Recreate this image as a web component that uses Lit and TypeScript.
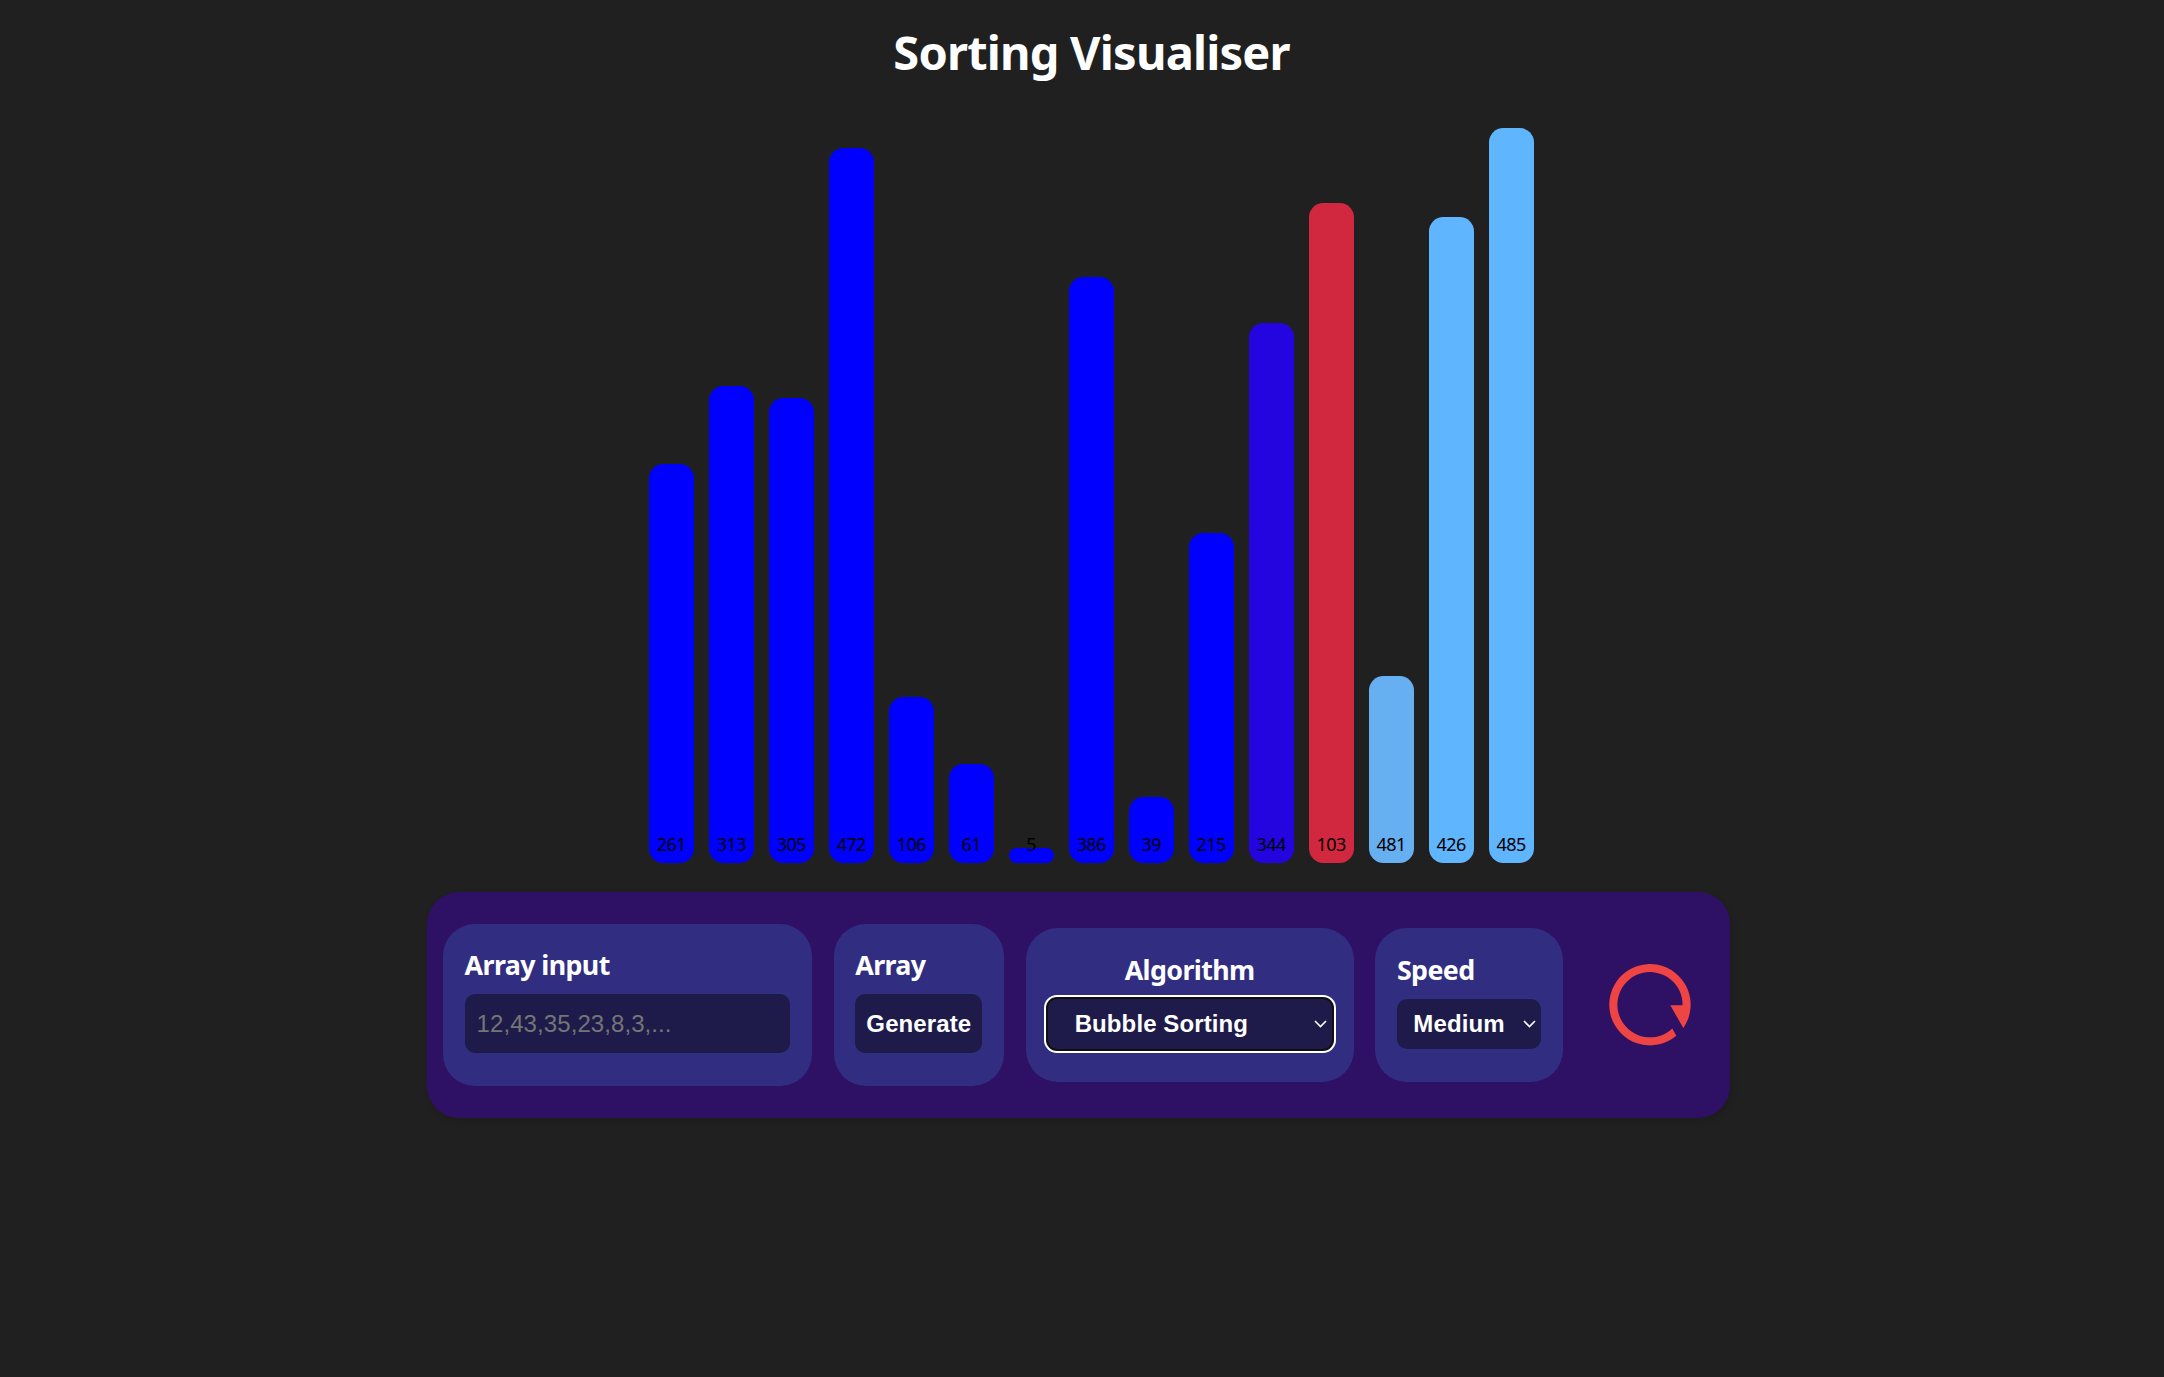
import { LitElement, html, css } from "lit";
import { customElement, state } from "lit/decorators.js";
import { styleMap } from "lit/directives/style-map.js";

interface Bar {
  label: number;
  height: number;
  color: string;
}

const IDLE = "#0000ff";
const SORTED = "#60b5ff";

@customElement("app-root")
export class AppRoot extends LitElement {
  @state() private bars: Bar[] = [
    { label: 261, height: 399, color: IDLE },
    { label: 313, height: 477, color: IDLE },
    { label: 305, height: 465, color: IDLE },
    { label: 472, height: 715, color: IDLE },
    { label: 106, height: 166, color: IDLE },
    { label: 61, height: 99, color: IDLE },
    { label: 5, height: 15, color: IDLE },
    { label: 386, height: 586, color: IDLE },
    { label: 39, height: 66, color: IDLE },
    { label: 215, height: 330, color: IDLE },
    { label: 344, height: 540, color: "#2405e0" },
    { label: 103, height: 660, color: "#d12840" },
    { label: 481, height: 187, color: "#66aff0" },
    { label: 426, height: 646, color: SORTED },
    { label: 485, height: 735, color: SORTED },
  ];

  static styles = css`
    :host {
      display: flex;
      flex-direction: column;
      align-items: center;
      box-sizing: border-box;
      min-height: 1377px;
      background: #202020;
      color: #fff;
      font-family: "Noto Sans", "Open Sans", sans-serif;
    }
    * {
      box-sizing: border-box;
    }
    h1 {
      margin: 0;
      padding: 20px 0 0 19px;
      height: 108px;
      font-size: 47px;
      line-height: 64px;
      font-weight: 700;
      letter-spacing: -0.8px;
      white-space: nowrap;
    }
    .chart {
      display: flex;
      align-items: flex-end;
      gap: 15.2px;
      height: 755px;
      padding-left: 19.4px;
    }
    .column {
      display: grid;
      width: 44.8px;
      align-items: end;
    }
    .bar {
      grid-area: 1 / 1;
      border-radius: 14.4px;
    }
    .value {
      grid-area: 1 / 1;
      padding: 0 1px 6px 0;
      color: #000;
      font-size: 18px;
      line-height: 26px;
      letter-spacing: -0.6px;
      text-align: center;
    }
    .panel {
      display: flex;
      align-items: center;
      width: 1303px;
      height: 226.4px;
      margin-top: 28.7px;
      margin-right: 7px;
      padding-left: 16px;
      border-radius: 32px;
      background: #2e1065;
      box-shadow: 2px 3px 6px rgba(0, 0, 0, 0.12);
    }
    .card {
      display: flex;
      flex-direction: column;
      height: 162px;
      margin-right: 21.6px;
      padding: 21px 21.6px 0;
      border-radius: 32px;
      background: #312e81;
    }
    .card.low {
      height: 153.4px;
      padding-top: 21.6px;
    }
    .input-card {
      width: 369px;
    }
    .array-card {
      width: 170.4px;
    }
    .algorithm-card {
      width: 328.2px;
      align-items: center;
    }
    .speed-card {
      width: 187.2px;
    }
    .caption {
      height: 49px;
      font-size: 26.8px;
      line-height: 39px;
      font-weight: 700;
      letter-spacing: -0.6px;
      white-space: nowrap;
    }
    input,
    button,
    select {
      margin: 0;
      border: 0;
      outline: 0;
      border-radius: 10px;
      background: #1e1b4b;
      color: #fff;
      font-family: "Liberation Sans", Arial, sans-serif;
      font-size: 24px;
    }
    input {
      width: 100%;
      height: 59.6px;
      padding: 0 12px;
      letter-spacing: 0.08px;
    }
    input::placeholder {
      color: #757575;
      opacity: 1;
    }
    button,
    select {
      font-weight: 700;
      letter-spacing: 0.1px;
    }
    .generate {
      width: 100%;
      height: 59.6px;
      padding: 0;
      text-align: center;
    }
    .select {
      display: grid;
      align-items: center;
    }
    select {
      grid-area: 1 / 1;
      appearance: none;
      height: 50px;
    }
    .arrow {
      grid-area: 1 / 1;
      justify-self: end;
      pointer-events: none;
      fill: none;
      stroke: #fff;
      stroke-width: 1.6;
    }
    .algorithm select {
      width: 284px;
      padding: 0 0 0 27px;
      border-radius: 9px;
      box-shadow: 0 0 0 2px #101010, 0 0 0 4px #fff;
    }
    .algorithm .arrow {
      margin-right: 4.6px;
    }
    .speed select {
      width: 144px;
      padding: 0 0 0 16.4px;
    }
    .speed .arrow {
      margin-right: 4.6px;
    }
    .restart {
      width: 82px;
      height: 82px;
      margin-left: 24.6px;
      padding: 0;
      background: none;
    }
    .restart svg {
      display: block;
      fill: #ef4444;
    }
  `;

  private arrow() {
    return html`<svg class="arrow" width="13" height="8" viewBox="0 0 13 8">
      <path d="M1 1 L6.5 6.5 L12 1" />
    </svg>`;
  }

  render() {
    return html`
      <h1>Sorting Visualiser</h1>
      <div class="chart">
        ${this.bars.map(
          (b) => html`<div class="column">
            <div
              class="bar"
              style=${styleMap({ height: `${b.height}px`, background: b.color })}
            ></div>
            <div class="value">${b.label}</div>
          </div>`
        )}
      </div>
      <div class="panel">
        <div class="card input-card">
          <div class="caption">Array input</div>
          <input placeholder="12,43,35,23,8,3,..." />
        </div>
        <div class="card array-card">
          <div class="caption">Array</div>
          <button class="generate">Generate</button>
        </div>
        <div class="card low algorithm-card">
          <div class="caption">Algorithm</div>
          <div class="select algorithm">
            <select>
              <option>Bubble Sorting</option>
            </select>
            ${this.arrow()}
          </div>
        </div>
        <div class="card low speed-card">
          <div class="caption">Speed</div>
          <div class="select speed">
            <select>
              <option>Medium</option>
            </select>
            ${this.arrow()}
          </div>
        </div>
        <button class="restart">
          <svg width="82" height="82" viewBox="0 0 82 82">
            <path
              d="M67.3 71.7 A40.7 40.7 0 1 1 74.3 64 L61.3 41.3 H73.6 A32.6 32.6 0 1 0 63.3 64.5 Z"
            />
          </svg>
        </button>
      </div>
    `;
  }
}
